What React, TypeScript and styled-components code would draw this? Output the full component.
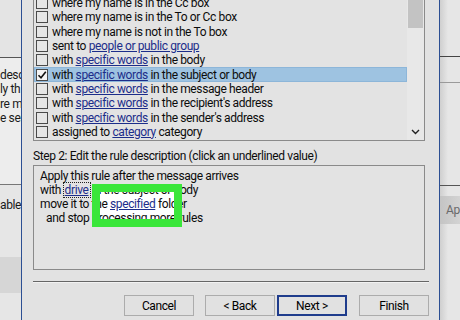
import { FC } from 'react'
import styled, { createGlobalStyle } from 'styled-components'

const GlobalStyle = createGlobalStyle`
  html, body {
    margin: 0;
    padding: 0;
    background: #e4e4e4;
  }
  * {
    box-sizing: border-box;
  }
`

const Page = styled.div`
  display: flex;
  width: 460px;
  height: 320px;
  overflow: hidden;
  font-family: Roboto, 'Liberation Sans', 'DejaVu Sans', sans-serif;
  font-size: 12px;
  letter-spacing: -0.38px;
  color: #0c0c0c;
`

/* windows behind the dialog */
const SideWindow = styled.div<{ $width: number }>`
  width: ${(p) => p.$width}px;
  flex: none;
  display: flex;
  flex-direction: column;
  overflow: hidden;
  white-space: nowrap;
  background: #e6e6e6;
`

const SideBlock = styled.div<{ $height: number; $bg: string; $line?: string }>`
  height: ${(p) => p.$height}px;
  flex: none;
  background: ${(p) => p.$bg};
  border-bottom: ${(p) => (p.$line ? `1px solid ${p.$line}` : 'none')};
  overflow: hidden;
`

const SideText = styled.div<{ $pad?: number }>`
  line-height: 14.4px;
  padding-top: ${(p) => p.$pad ?? 0}px;
  color: #1a1a1a;
`

const ApButton = styled.div`
  height: 28px;
  margin-top: 10px;
  background: linear-gradient(to right, #c4c4c4, #d3d3d3);
  color: #6a6a6a;
  line-height: 28px;
  padding-left: 6px;
`

/* dialog */
const Dialog = styled.div`
  width: 419px;
  flex: none;
  border-left: 1px solid #2c4f93;
  border-right: 1px solid #2c4f93;
  background: #e2e2e2;
  padding: 0 10px 0 11px;
  display: flex;
  flex-direction: column;
`

const ListBox = styled.div`
  margin-top: -5px;
  margin-right: 4px;
  height: 146px;
  flex: none;
  border: 1px solid #8a8a8a;
  background: #e3e3e3;
  display: flex;
`

const Rows = styled.div`
  flex: 1;
`

const Row = styled.div<{ $selected?: boolean }>`
  height: 14.3px;
  display: flex;
  align-items: center;
  gap: 4px;
  padding-left: 2px;
  white-space: nowrap;
  background: ${(p) => (p.$selected ? '#9ec3e1' : 'transparent')};
  box-shadow: ${(p) => (p.$selected ? 'inset 0 0 0 1px #8db6d9' : 'none')};
`

const Check = styled.span<{ $checked?: boolean }>`
  width: 12px;
  height: 12px;
  flex: none;
  border: 1px solid #4a4a4a;
  background: ${(p) => (p.$checked ? '#f4f4f4' : '#e6e6e6')};
  display: flex;
  align-items: center;
  justify-content: center;
`

const Link = styled.span`
  color: #1c2d8a;
  text-decoration: underline;
  text-underline-offset: 1px;
`

const Focused = styled(Link)`
  outline: 1px dotted #222;
  outline-offset: 0;
  padding: 0 1px;
`

const ScrollBar = styled.div`
  width: 17px;
  flex: none;
  background: #e8e8e8;
  display: flex;
  flex-direction: column;
`

const Thumb = styled.div`
  height: 32px;
  margin: 0 1px;
  background: #c3c3c3;
`

const ScrollSpace = styled.div`
  flex: 1;
`

const ArrowCell = styled.div`
  height: 16px;
  display: flex;
  align-items: center;
  justify-content: center;
`

const StepLabel = styled.div`
  margin-top: 7px;
  line-height: 16px;
  white-space: nowrap;
`

const DescBox = styled.div`
  position: relative;
  margin-top: 1px;
  margin-right: 4px;
  height: 105px;
  flex: none;
  border: 1px solid #8a8a8a;
  background: #e3e3e3;
  padding: 3px 0 0 6px;
`

const DescLine = styled.div<{ $indent?: number }>`
  position: relative;
  z-index: 1;
  line-height: 14px;
  padding-left: ${(p) => p.$indent ?? 0}px;
  white-space: nowrap;
`

const HighlightFill = styled.div`
  position: absolute;
  left: 58px;
  top: 18px;
  width: 90px;
  height: 43px;
  background: #ffffff;
  z-index: 0;
`

const HighlightFrame = styled(HighlightFill)`
  background: transparent;
  border: 8px solid #3ae63a;
  z-index: 2;
`

const Separator = styled.div`
  margin-top: 11px;
  height: 1px;
  background: #666;
  box-shadow: 0 1px 0 #f2f2f2;
`

const ButtonRow = styled.div`
  margin-top: 13px;
  display: flex;
  justify-content: flex-end;
`

const Button = styled.div<{ $gap: number; $default?: boolean }>`
  width: 70px;
  height: 21px;
  margin-left: ${(p) => p.$gap}px;
  background: #e1e1e1;
  border: 1px solid ${(p) => (p.$default ? '#1f3c8c' : '#acacac')};
  box-shadow: ${(p) => (p.$default ? 'inset 0 0 0 1px #1f3c8c' : 'none')};
  display: flex;
  align-items: center;
  justify-content: center;
  color: #000;
`

const RightWindow = styled(SideWindow)`
  background: linear-gradient(to right, #cfcfcf, #e6e6e6 8px, #e6e6e6);
`

interface Condition {
  before: string
  link?: string
  after?: string
  checked?: boolean
}

const conditions: Condition[] = [
  { before: 'where my name is in the Cc box' },
  { before: 'where my name is in the To or Cc box' },
  { before: 'where my name is not in the To box' },
  { before: 'sent to ', link: 'people or public group' },
  { before: 'with ', link: 'specific words', after: ' in the body' },
  { before: 'with ', link: 'specific words', after: ' in the subject or body', checked: true },
  { before: 'with ', link: 'specific words', after: ' in the message header' },
  { before: 'with ', link: 'specific words', after: " in the recipient's address" },
  { before: 'with ', link: 'specific words', after: " in the sender's address" },
  { before: 'assigned to ', link: 'category', after: ' category' },
]

const CheckMark: FC = () => (
  <svg width="10" height="10" viewBox="0 0 10 10">
    <path d="M1.5 5.2 L4 7.8 L8.8 1.8" fill="none" stroke="#111" strokeWidth="1.6" />
  </svg>
)

const App: FC = () => {
  return (
    <>
      <GlobalStyle />
      <Page>
        <SideWindow $width={21}>
          <SideBlock $height={58} $bg="#e4e4e4" $line="#555" />
          <SideBlock $height={127} $bg="#ededed" $line="#777">
            <SideText $pad={10}>
              descr
              <br />
              ly th
              <br />
              re m
              <br />
              e sen
            </SideText>
          </SideBlock>
          <SideBlock $height={72} $bg="#e6e6e6">
            <SideText $pad={13}>able</SideText>
          </SideBlock>
          <SideBlock $height={36} $bg="#d6d6d6" />
        </SideWindow>

        <Dialog>
          <ListBox>
            <Rows>
              {conditions.map((c, i) => (
                <Row key={i} $selected={c.checked}>
                  <Check $checked={c.checked}>{c.checked && <CheckMark />}</Check>
                  <span>
                    {c.before}
                    {c.link && <Link>{c.link}</Link>}
                    {c.after}
                  </span>
                </Row>
              ))}
            </Rows>
            <ScrollBar>
              <Thumb />
              <ScrollSpace />
              <ArrowCell>
                <svg width="9" height="6" viewBox="0 0 9 6">
                  <path d="M1 1 L4.5 4.5 L8 1" fill="none" stroke="#222" strokeWidth="1.4" />
                </svg>
              </ArrowCell>
            </ScrollBar>
          </ListBox>

          <StepLabel>Step 2: Edit the rule description (click an underlined value)</StepLabel>

          <DescBox>
            <HighlightFill />
            <DescLine>Apply this rule after the message arrives</DescLine>
            <DescLine>
              with <Focused>drive</Focused> in the subject or body
            </DescLine>
            <DescLine>
              move it to the <Link>specified</Link> folder
            </DescLine>
            <DescLine $indent={6}>and stop processing more rules</DescLine>
            <HighlightFrame />
          </DescBox>

          <Separator />

          <ButtonRow>
            <Button $gap={0}>Cancel</Button>
            <Button $gap={11}>&lt; Back</Button>
            <Button $gap={2} $default>
              Next &gt;
            </Button>
            <Button $gap={12}>Finish</Button>
          </ButtonRow>
        </Dialog>

        <RightWindow $width={20}>
          <SideBlock $height={57} $bg="transparent" $line="#444" />
          <SideBlock $height={26} $bg="transparent" $line="#9a9a9a" />
          <SideBlock $height={103} $bg="transparent" $line="#555" />
          <ApButton>Ap</ApButton>
        </RightWindow>
      </Page>
    </>
  )
}

export default App
